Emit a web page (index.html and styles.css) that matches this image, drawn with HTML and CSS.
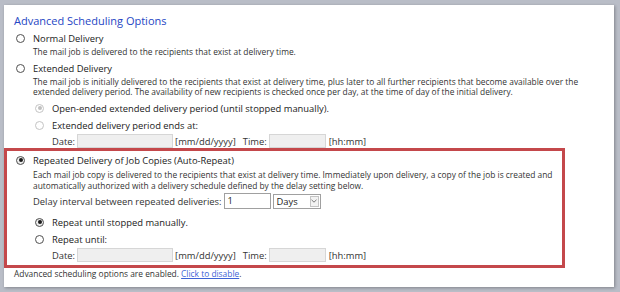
FILE: index.html
```html
<!DOCTYPE html>
<html lang="en">
<head>
    <meta charset="UTF-8" />
    <title>Advanced Scheduling Options</title>
    <link rel="stylesheet" href="styles.css">
</head>
<body>
    <div class="panel">
        <h2 class="title">Advanced Scheduling Options</h2>

        <div class="option first">
            <div class="label"><span class="radio"></span>Normal Delivery</div>
            <p class="desc">The mail job is delivered to the recipients that exist at delivery time.</p>
        </div>

        <div class="option">
            <div class="label"><span class="radio"></span>Extended Delivery</div>
            <p class="desc">The mail job is initially delivered to the recipients that exist at delivery time, plus later to all further recipients that become available over the extended delivery period. The availability of new recipients is checked once per day, at the time of day of the initial delivery.</p>
            <div class="sub">
                <div class="label"><span class="radio disabled checked"></span>Open-ended extended delivery period (until stopped manually).</div>
                <div class="label"><span class="radio disabled"></span>Extended delivery period ends at:</div>
                <div class="date-row">
                    <span>Date:</span>
                    <span class="field date"></span>
                    <span>[mm/dd/yyyy]</span>
                    <span class="time-label">Time:</span>
                    <span class="field time"></span>
                    <span class="hint">[hh:mm]</span>
                </div>
            </div>
        </div>

        <div class="option highlight">
            <div class="label"><span class="radio checked"></span>Repeated Delivery of Job Copies (Auto-Repeat)</div>
            <p class="desc">Each mail job copy is delivered to the recipients that exist at delivery time. Immediately upon delivery, a copy of the job is created and automatically authorized with a delivery schedule defined by the delay setting below.</p>
            <div class="delay">
                <span>Delay interval between repeated deliveries:</span>
                <span class="num">1</span>
                <span class="select">Days
                    <span class="arrow">
                        <svg width="6" height="4" viewBox="0 0 6 4"><path d="M0.5 0.8 L3 3.2 L5.5 0.8" fill="none" stroke="#777" stroke-width="1"/></svg>
                    </span>
                </span>
            </div>
            <div class="sub">
                <div class="label"><span class="radio checked"></span>Repeat until stopped manually.</div>
                <div class="label"><span class="radio"></span>Repeat until:</div>
                <div class="date-row">
                    <span>Date:</span>
                    <span class="field date"></span>
                    <span>[mm/dd/yyyy]</span>
                    <span class="time-label">Time:</span>
                    <span class="field time"></span>
                    <span class="hint">[hh:mm]</span>
                </div>
            </div>
        </div>

        <p class="footer">Advanced scheduling options are enabled. <a href="#">Click to disable</a>.</p>
    </div>
</body>
</html>
```

FILE: styles.css
```css
* {
    box-sizing: border-box;
    margin: 0;
    padding: 0;
}

body {
    background: #b9bdc7;
    width: 620px;
    height: 292px;
    padding: 5px 6px 5px 4px;
    font-family: 'Open Sans', sans-serif;
    color: #222;
    overflow: hidden;
}

.panel {
    background: #ffffff;
    height: 282px;
    box-shadow: 1px 1px 3px rgba(0, 0, 0, 0.3);
    padding-top: 7.5px;
}

.title {
    font-size: 11px;
    font-weight: 400;
    color: #2546c4;
    margin-left: 10px;
    line-height: 15px;
}

.option {
    padding-left: 12px;
    margin-top: 4.5px;
}

.option.first {
    margin-top: 4px;
}

.label {
    display: flex;
    align-items: center;
    font-size: 9.4px;
    line-height: 13px;
    color: #222;
    white-space: nowrap;
}

.radio {
    width: 9px;
    height: 9px;
    border: 1px solid #505050;
    border-radius: 50%;
    margin-right: 8px;
    display: inline-flex;
    align-items: center;
    justify-content: center;
    flex-shrink: 0;
}

.radio.checked {
    background: #ececec;
}

.radio.checked::after {
    content: "";
    width: 4px;
    height: 4px;
    border-radius: 50%;
    background: #1a1a1a;
}

.radio.disabled {
    border-color: #c4c4c4;
    background: #fff;
}

.radio.disabled.checked::after {
    background: #c0c0c0;
}

.desc {
    font-size: 8.4px;
    line-height: 10px;
    color: #333;
    margin: 2.5px 0 0 17px;
}

.sub {
    margin: 4.5px 0 0 19px;
}

.sub .label + .label {
    margin-top: 4px;
}

.date-row {
    display: flex;
    align-items: center;
    height: 14px;
    font-size: 9.4px;
    color: #333;
    margin: 2.5px 0 0 17px;
    white-space: nowrap;
}

.field {
    display: inline-block;
    height: 14px;
    background: #efefef;
    border: 1px solid #d6d6d6;
}

.field.date {
    width: 96px;
    margin: 0 2px 0 2px;
}

.field.time {
    width: 57px;
    margin: 0 3px 0 2px;
}

.time-label {
    margin-left: 7px;
}

.highlight {
    border: 3px solid #c4484b;
    margin: 0 49px 0 0;
    padding: 2.5px 0 3px 9px;
}

.highlight .desc {
    line-height: 11px;
    margin-top: 2px;
    max-width: 530px;
}

.delay {
    display: flex;
    align-items: center;
    height: 16px;
    font-size: 9.4px;
    color: #333;
    margin: 2.5px 0 0 17px;
    white-space: nowrap;
}

.num {
    display: inline-block;
    width: 47px;
    height: 16px;
    border: 1px solid #a0a0a0;
    margin-left: 2px;
    padding-left: 3px;
    line-height: 14px;
    color: #222;
}

.select {
    display: inline-flex;
    align-items: center;
    justify-content: space-between;
    width: 48px;
    height: 15px;
    border: 1px solid #a0a0a0;
    margin-left: 2px;
    padding: 0 1px 0 3px;
    color: #222;
}

.arrow {
    display: inline-flex;
    align-items: center;
    justify-content: center;
    width: 9px;
    height: 11px;
    border: 1px solid #c4c4c4;
    background: #f3f3f3;
}

.highlight .sub {
    margin-top: 6.5px;
    margin-left: 19px;
}

.footer {
    font-size: 8.4px;
    line-height: 10px;
    color: #333;
    margin: 1px 0 0 10px;
}

.footer a {
    color: #3d63d6;
}
```
